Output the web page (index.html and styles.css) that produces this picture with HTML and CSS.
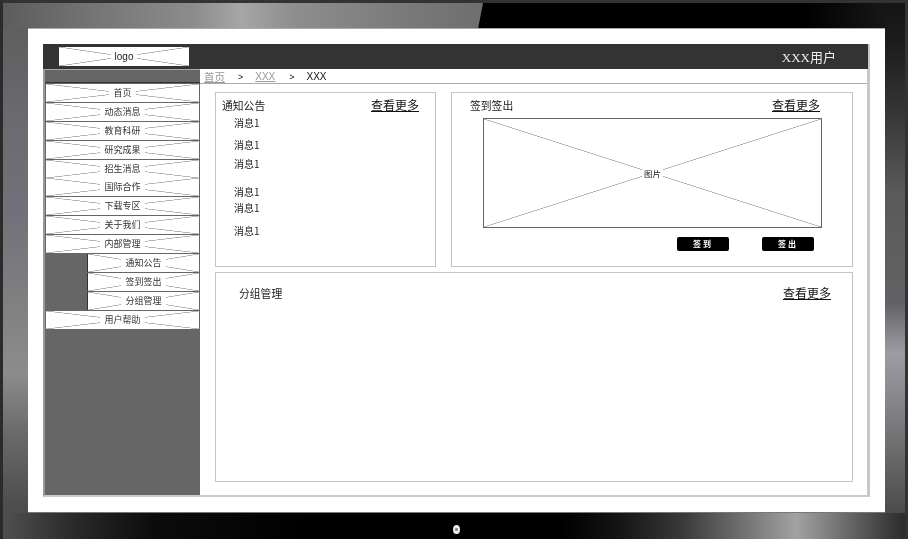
FILE: index.html
```html
<!DOCTYPE html>
<html lang="zh">
<head>
<meta charset="utf-8">
<title>后台原型</title>
<link rel="stylesheet" href="styles.css">
</head>
<body>
<div class="bezel">
  <div class="glare"></div>
  <div class="camera"></div>
  <div class="screen">
    <div class="frame">
      <header class="topbar">
        <div class="logo xbox"><span>logo</span></div>
        <div class="user">XXX用户</div>
      </header>
      <div class="body">
        <nav class="side">
          <div class="side-strip"></div>
          <div class="item xbox"><span>首页</span></div>
          <div class="item xbox"><span>动态消息</span></div>
          <div class="item xbox"><span>教育科研</span></div>
          <div class="item xbox"><span>研究成果</span></div>
          <div class="item xbox"><span>招生消息</span></div>
          <div class="item xbox"><span>国际合作</span></div>
          <div class="item xbox"><span>下载专区</span></div>
          <div class="item xbox"><span>关于我们</span></div>
          <div class="item xbox"><span>内部管理</span></div>
          <div class="item sub xbox"><span>通知公告</span></div>
          <div class="item sub xbox"><span>签到签出</span></div>
          <div class="item sub xbox"><span>分组管理</span></div>
          <div class="item xbox"><span>用户帮助</span></div>
        </nav>
        <main class="content">
          <div class="crumbs">
            <a class="crumb-link">首页</a><i>&gt;</i>
            <a class="crumb-link">XXX</a><i>&gt;</i>
            <span>XXX</span>
          </div>
          <div class="panels">
            <div class="row-top">
              <section class="panel notice">
                <div class="panel-head"><h2>通知公告</h2><a class="more">查看更多</a></div>
                <ul class="msgs">
                  <li>消息1</li><li>消息1</li><li>消息1</li><li>消息1</li><li>消息1</li><li>消息1</li>
                </ul>
              </section>
              <section class="panel sign">
                <div class="panel-head"><h2>签到签出</h2><a class="more">查看更多</a></div>
                <div class="picture xbox"><span>图片</span></div>
                <div class="buttons">
                  <button class="btn">签到</button>
                  <button class="btn">签出</button>
                </div>
              </section>
            </div>
            <section class="panel group">
              <div class="panel-head"><h2>分组管理</h2><a class="more">查看更多</a></div>
            </section>
          </div>
        </main>
      </div>
    </div>
  </div>
</div>
</body>
</html>
```

FILE: styles.css
```css
* { box-sizing: border-box; }
html, body { margin: 0; padding: 0; }
body {
  width: 908px;
  height: 539px;
  overflow: hidden;
  background: #2a2a2a;
  font-family: "Noto Sans CJK SC", "Liberation Sans", sans-serif;
  color: #222;
}
.bezel {
  position: relative;
  width: 908px;
  height: 539px;
  padding: 25px 20px 26px 25px;
  border-style: solid;
  border-width: 3px 3px 0 3px;
  border-color: #333 #333 #333 #2b2b2b;
  background:
    linear-gradient(90deg, #505050 0, #2a2a2a 70px, #0c0c0c 150px, #000 300px, #000 560px, #161616 620px, #3a3a3a 680px, #7a7a7a 750px, #a2a2a2 793px, #6e6e6e 840px, #3c3c3c 885px, #2c2c2c 902px) bottom / 100% 26px no-repeat,
    linear-gradient(180deg, #141414 0, #1c1c1c 40px, #363636 110px, #5a5a5a 190px, #626266 300px, #9c9ca2 350px, #808084 410px, #505050 500px, #3a3a3a 536px) right / 20px 100% no-repeat,
    linear-gradient(180deg, #5c5c5c 0, #6a6a70 120px, #72727a 220px, #808082 300px, #8c8c8e 370px, #6a6a6a 430px, #4e4e4e 500px, #484848 536px) left / 25px 100% no-repeat,
    linear-gradient(90deg, #000 0, #000 800px, #1c1c1c 902px);
}
.glare {
  position: absolute;
  left: 0;
  top: 0;
  width: 480px;
  height: 25px;
  background: linear-gradient(90deg, #5c5c5c 0, #777 100px, #8c8c8c 190px, #a6a6a6 238px, #8e8e8e 290px, #7a7a7a 400px, #6e6e6e 480px);
  clip-path: polygon(0 0, 100% 0, 99% 100%, 0 100%);
}
.camera {
  position: absolute;
  left: 450px;
  top: 522px;
  width: 7px;
  height: 9px;
  border-radius: 50%;
  background: radial-gradient(circle, #888 0 1.2px, #eee 2px);
  filter: blur(0.3px);
}
.screen {
  position: relative;
  width: 857px;
  height: 485px;
  background: #fff;
  border-top: 1px solid #aaa;
  border-bottom: 1px solid #777;
  padding: 15px 15px 16px 15px;
  filter: blur(0.5px);
}
.frame {
  width: 827px;
  height: 453px;
  border-left: 2px solid #999;
  border-right: 3px solid #c8c8c8;
  border-bottom: 2px solid #ccc;
  display: flex;
  flex-direction: column;
}
.xbox {
  display: flex;
  align-items: center;
  justify-content: center;
  background:
    linear-gradient(to top right, transparent calc(50% - .6px), #b4b4b4 calc(50% - .3px), #b4b4b4 calc(50% + .3px), transparent calc(50% + .6px)),
    linear-gradient(to bottom right, transparent calc(50% - .6px), #b4b4b4 calc(50% - .3px), #b4b4b4 calc(50% + .3px), transparent calc(50% + .6px)),
    #fff;
}
.xbox span {
  background: #fff;
  padding: 0 4px;
  line-height: 12px;
}
.topbar {
  flex: none;
  height: 25px;
  margin-left: -2px;
  margin-right: -1px;
  padding: 3px 32px 3px 16px;
  background: #333;
  display: flex;
  justify-content: space-between;
  align-items: center;
}
.logo {
  width: 130px;
  height: 19px;
  font-size: 10px;
  font-family: "Liberation Sans", sans-serif;
  color: #222;
}
.user {
  color: #eee;
  font-size: 13px;
  font-family: "Liberation Serif", "Noto Sans CJK SC", serif;
}
.body {
  flex: 1;
  min-height: 0;
  display: flex;
}
.side {
  flex: none;
  width: 155px;
  background: #666;
  border-top: 1px solid #aaa;
  display: flex;
  flex-direction: column;
  align-items: flex-end;
}
.side-strip {
  width: 100%;
  height: 13px;
  border-bottom: 1px solid #333;
}
.item {
  width: 153px;
  height: 18px;
  margin: 0 1px 0.9px 1px;
  font-size: 9px;
  color: #333;
  flex: none;
}
.side-strip + .item { margin-top: 1px; }
.item.sub {
  width: 112px;
  border-left: 1px solid #333;
}
.content {
  flex: 1;
  min-width: 0;
  display: flex;
  flex-direction: column;
}
.crumbs {
  flex: none;
  height: 14px;
  margin-top: 1px;
  padding-left: 4px;
  border-bottom: 1px solid #aaa;
  display: flex;
  align-items: center;
  font-size: 10.5px;
  line-height: 12px;
  color: #111;
}
.crumb-link { color: #999; text-decoration: underline; }
.crumbs i { font-style: normal; font-size: 9px; margin: 0 12px 0 13px; font-family: "Liberation Sans", sans-serif; }
.crumbs .crumb-link:first-child { width: 21px; }
.crumbs .crumb-link:nth-of-type(2) { width: 21px; font-family: "Liberation Sans", sans-serif; font-size: 10px; }
.crumbs span { font-family: "Liberation Sans", sans-serif; font-size: 10px; }
.panels {
  padding: 8px 14px 13px 15px;
  flex: 1;
  display: flex;
  flex-direction: column;
  gap: 5px;
}
.row-top {
  display: flex;
  gap: 15px;
  height: 175px;
  flex: none;
}
.panel {
  border: 1px solid #c4c4c4;
  background: #fff;
}
.panel-head {
  display: flex;
  justify-content: space-between;
  align-items: center;
}
h2 {
  margin: 0;
  font-size: 10.8px;
  font-weight: 400;
  line-height: 14px;
  color: #222;
}
.more {
  font-size: 12px;
  line-height: 15px;
  color: #111;
  text-decoration: underline;
}
.notice {
  width: 221px;
  flex: none;
  padding: 4px 16px 0 6px;
}
.msgs {
  list-style: none;
  margin: 5px 0 0 12px;
  padding: 0;
  display: grid;
  grid-template-rows: repeat(6, auto);
  font-size: 10px;
  line-height: 12px;
  color: #222;
}
.msgs li:nth-child(2) { margin-top: 10px; }
.msgs li:nth-child(3) { margin-top: 7px; }
.msgs li:nth-child(4) { margin-top: 16px; }
.msgs li:nth-child(5) { margin-top: 4px; }
.msgs li:nth-child(6) { margin-top: 11px; }
.sign {
  flex: 1;
  min-width: 0;
  padding: 4px 32px 0 18px;
}
.picture {
  width: 339px;
  height: 110px;
  margin: 6px 0 0 13px;
  border: 1px solid #666;
  font-size: 8.5px;
  color: #222;
}
.picture span { padding: 0 2px; }
.buttons {
  display: flex;
  justify-content: flex-end;
  gap: 33px;
  margin-top: 9px;
  margin-right: 6px;
}
.btn {
  width: 52px;
  height: 14px;
  padding: 0;
  border: 0;
  border-radius: 2px;
  background: #000;
  color: #fff;
  font-size: 8px;
  font-weight: 700;
  letter-spacing: 2px;
  line-height: 14px;
  font-family: "Noto Sans CJK SC", sans-serif;
}
.group {
  flex: none;
  height: 210px;
  padding: 12px 21px 0 23px;
}
```
